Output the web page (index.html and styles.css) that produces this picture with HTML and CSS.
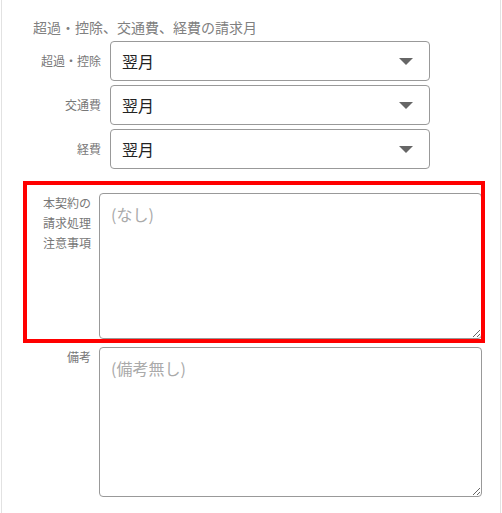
FILE: index.html
```html
<!DOCTYPE html>
<html lang="ja">
<head>
<meta charset="utf-8">
<title>請求月</title>
<link rel="stylesheet" href="styles.css">
</head>
<body>
<div class="panel">
  <h3 class="heading">超過・控除、交通費、経費の請求月</h3>
  <div class="select-list">
    <div class="select-row">
      <span class="select-label">超過・控除</span>
      <div class="select">
        <span class="select-value">翌月</span>
        <svg class="select-arrow" width="14" height="7" viewBox="0 0 14 7"><path d="M0 0H14L7 7Z" fill="#666"/></svg>
      </div>
    </div>
    <div class="select-row">
      <span class="select-label">交通費</span>
      <div class="select">
        <span class="select-value">翌月</span>
        <svg class="select-arrow" width="14" height="7" viewBox="0 0 14 7"><path d="M0 0H14L7 7Z" fill="#666"/></svg>
      </div>
    </div>
    <div class="select-row">
      <span class="select-label">経費</span>
      <div class="select">
        <span class="select-value">翌月</span>
        <svg class="select-arrow" width="14" height="7" viewBox="0 0 14 7"><path d="M0 0H14L7 7Z" fill="#666"/></svg>
      </div>
    </div>
  </div>
  <div class="text-row highlighted">
    <span class="text-label">本契約の<br>請求処理<br>注意事項</span>
    <textarea class="textarea textarea-notes" placeholder="(なし)"></textarea>
  </div>
  <div class="text-row">
    <span class="text-label">備考</span>
    <textarea class="textarea textarea-remarks" placeholder="(備考無し)"></textarea>
  </div>
</div>
</body>
</html>
```
FILE: styles.css
```css
html, body {
  margin: 0;
  padding: 0;
  background: #fff;
}
body {
  font-family: "Noto Sans CJK JP", "Noto Sans", sans-serif;
  padding: 0 1px;
}
.panel {
  border-left: 1px solid #e2e2e2;
  border-right: 1px solid #e2e2e2;
  min-height: 513px;
  box-sizing: border-box;
  padding-top: 17px;
}
.heading {
  margin: 0 0 4px 31px;
  font-size: 14px;
  font-weight: normal;
  line-height: 20px;
  color: #808080;
}
.select-list {
  display: flex;
  flex-direction: column;
  gap: 4px;
}
.select-row {
  display: flex;
  align-items: center;
  gap: 9px;
}
.select-label {
  width: 99px;
  text-align: right;
  font-size: 12px;
  color: #777;
  line-height: 20px;
}
.select {
  width: 320px;
  height: 40px;
  box-sizing: border-box;
  border: 1px solid #999;
  border-radius: 4px;
  display: flex;
  align-items: center;
  justify-content: space-between;
  padding: 0 16px 0 11px;
}
.select-value {
  font-size: 16px;
  color: #222;
}
.text-row {
  display: flex;
  align-items: flex-start;
  gap: 8px;
  margin-left: 25px;
  width: 454px;
}
.highlighted {
  margin-top: 16px;
  padding-top: 8px;
  outline: 4px solid #ff0000;
}
.text-row + .text-row {
  margin-top: 8px;
}
.text-label {
  width: 64px;
  flex: none;
  text-align: right;
  font-size: 12px;
  line-height: 20px;
  color: #777;
}
.textarea {
  flex: none;
  width: 383px;
  box-sizing: border-box;
  border: 1px solid #999;
  border-radius: 4px;
  padding: 8px 11px;
  margin: 0;
  font-family: "Noto Sans CJK JP", "Noto Sans", sans-serif;
  font-size: 16px;
  line-height: 24px;
  color: #222;
  background: #fff;
}
.textarea::placeholder {
  color: #aaa;
}
.textarea-notes {
  height: 146px;
}
.textarea-remarks {
  height: 150px;
}
```
